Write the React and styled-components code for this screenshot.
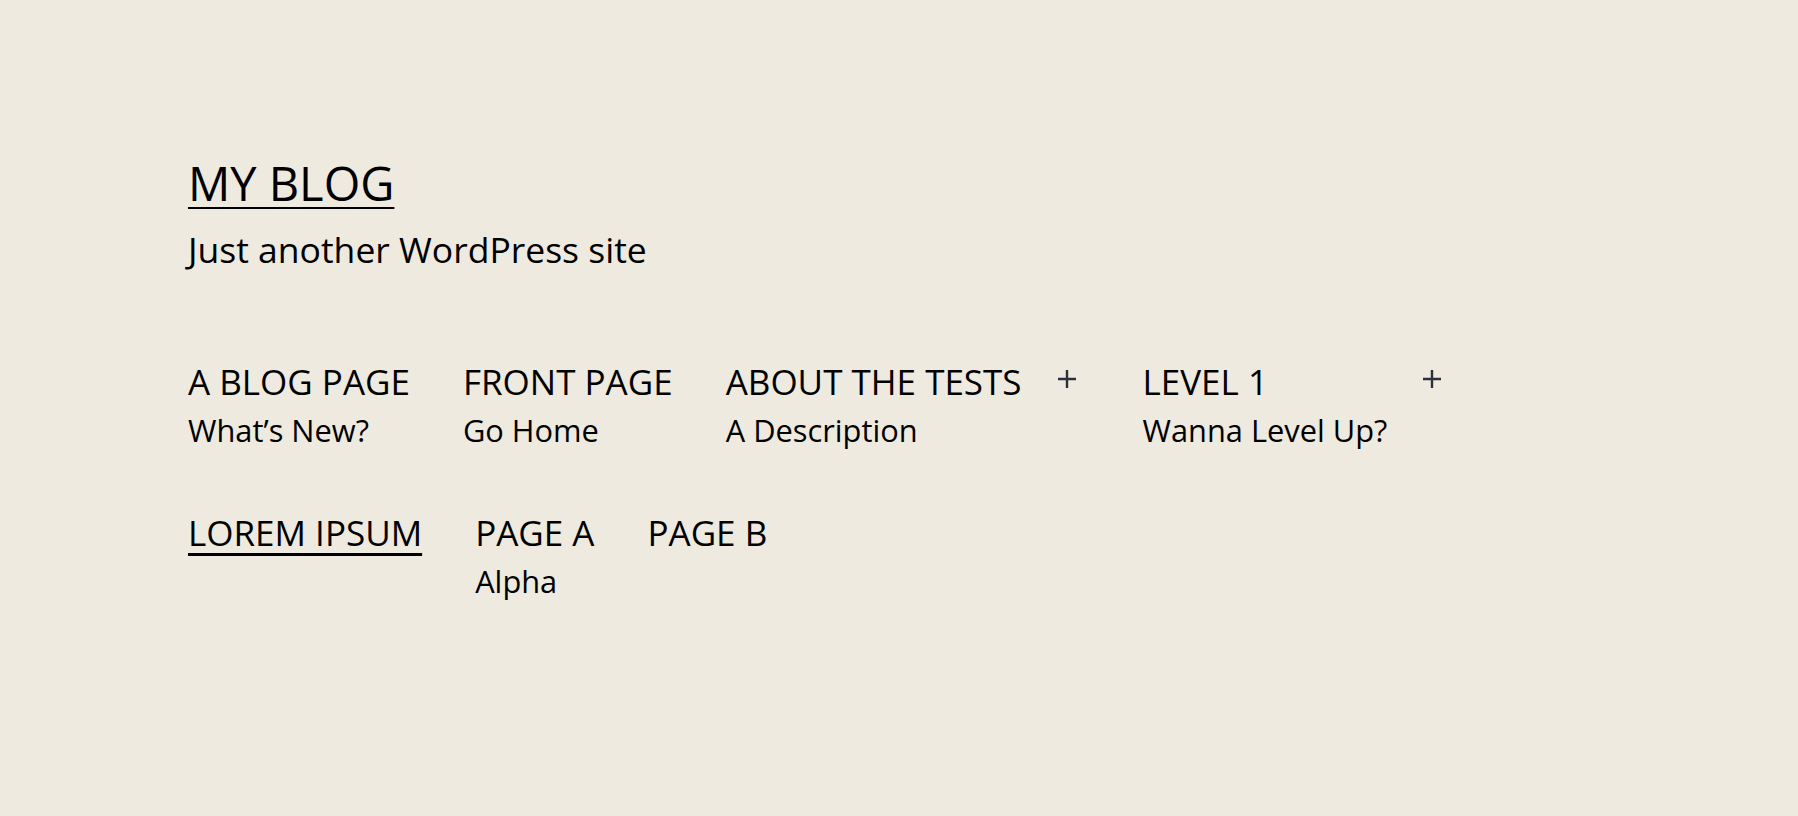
import React from 'react';
import styled, { createGlobalStyle } from 'styled-components';

const GlobalStyle = createGlobalStyle`
  html, body {
    margin: 0;
    padding: 0;
    background-color: #eeeadf;
  }
  body {
    font-family: "Open Sans", "Noto Sans", sans-serif;
    color: #000;
  }
`;

const Page = styled.div`
  min-height: 816px;
  padding: 160px 188px 0;
  box-sizing: border-box;
`;

const SiteTitle = styled.a`
  display: inline-block;
  font-size: 47px;
  line-height: 1;
  color: #000;
  text-decoration: underline;
  text-decoration-thickness: 2px;
  text-underline-offset: 6px;
`;

const Tagline = styled.p`
  margin: 25px 0 0;
  font-size: 35.5px;
  line-height: 1;
`;

const Nav = styled.nav`
  display: flex;
  flex-wrap: wrap;
  align-items: flex-start;
  column-gap: 53px;
  row-gap: 70px;
  margin-top: 96px;
`;

const Item = styled.div`
  display: flex;
  align-items: flex-start;
`;

const ItemLink = styled.a`
  display: flex;
  flex-direction: column;
  gap: 16px;
  color: #000;
  text-decoration: none;
`;

const Label = styled.span`
  font-size: 35px;
  line-height: 1;
  text-transform: uppercase;
  text-decoration: ${p => (p.$current ? 'underline' : 'none')};
  text-decoration-thickness: 3px;
  text-underline-offset: 7px;
`;

const Desc = styled.span`
  font-size: 30.8px;
  line-height: 1;
`;

const Toggle = styled.button`
  display: flex;
  align-items: center;
  justify-content: center;
  width: 30px;
  height: 18px;
  margin: 6px 8px 0 30px;
  padding: 0;
  border: none;
  background: none;
  color: #2b303b;
  cursor: pointer;
`;

const Plus = () => (
  <svg width="18" height="18" viewBox="0 0 18 18" aria-hidden="true">
    <path d="M9 0v18M0 9h18" stroke="currentColor" strokeWidth="2.4" fill="none" />
  </svg>
);

const items = [
  { label: 'A Blog Page', desc: 'What’s New?' },
  { label: 'Front Page', desc: 'Go Home' },
  { label: 'About The Tests', desc: 'A Description', sub: true },
  { label: 'Level 1', desc: 'Wanna Level Up?', sub: true },
  { label: 'Lorem Ipsum', current: true },
  { label: 'Page A', desc: 'Alpha' },
  { label: 'Page B' },
];

export default function App() {
  return (
    <>
      <GlobalStyle />
      <Page>
        <header>
          <SiteTitle href="#">MY BLOG</SiteTitle>
          <Tagline>Just another WordPress site</Tagline>
        </header>
        <Nav>
          {items.map(it => (
            <Item key={it.label}>
              <ItemLink href="#">
                <Label $current={it.current}>{it.label}</Label>
                {it.desc && <Desc>{it.desc}</Desc>}
              </ItemLink>
              {it.sub && (
                <Toggle aria-label="Open submenu">
                  <Plus />
                </Toggle>
              )}
            </Item>
          ))}
        </Nav>
      </Page>
    </>
  );
}
